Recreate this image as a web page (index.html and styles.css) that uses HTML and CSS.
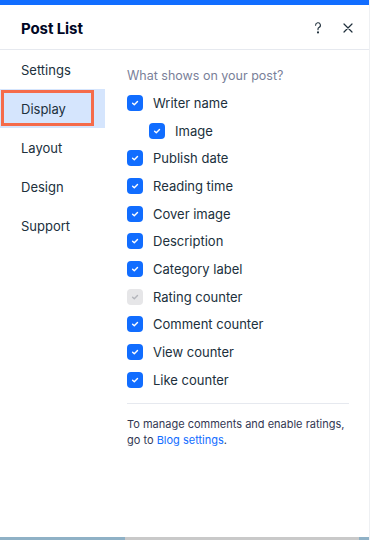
FILE: index.html
```html
<!DOCTYPE html>
<html lang="en">
<head>
  <meta charset="UTF-8">
  <meta name="viewport" content="width=device-width, initial-scale=1.0">
  <title>Post List</title>
  <link rel="stylesheet" href="styles.css">
</head>
<body>
  <div class="panel">
    <div class="top-bar"></div>
    <div class="header">
      <h1 class="title">Post List</h1>
      <div class="header-actions">
        <button class="icon-btn" aria-label="Help">
          <svg width="14" height="14" viewBox="0 0 14 14" fill="none" stroke="#20303c" stroke-width="1.1" stroke-linecap="round">
            <path d="M4.6 4.2a2.4 2.4 0 1 1 3.3 2.2c-.6.3-.9.8-.9 1.4v1"/>
            <circle cx="7" cy="11.4" r=".5" fill="#20303c"/>
          </svg>
        </button>
        <button class="icon-btn" aria-label="Close">
          <svg width="14" height="14" viewBox="0 0 14 14" fill="none" stroke="#20303c" stroke-width="1.2" stroke-linecap="round">
            <path d="M3 3l8 8M11 3l-8 8"/>
          </svg>
        </button>
      </div>
    </div>

    <div class="main">
      <nav class="sidebar">
        <div class="nav-item">Settings</div>
        <div class="nav-item active">Display<span class="highlight"></span></div>
        <div class="nav-item">Layout</div>
        <div class="nav-item">Design</div>
        <div class="nav-item">Support</div>
      </nav>

      <div class="content">
        <div class="section-title">What shows on your post?</div>
        <div class="options" id="options"></div>
        <div class="divider"></div>
        <p class="note">To manage comments and enable ratings,<br>go to <a href="#">Blog settings</a>.</p>
      </div>
    </div>

    <div class="bottom-strip">
      <span class="strip-a"></span>
      <span class="strip-b"></span>
      <span class="strip-c"></span>
    </div>
  </div>

  <script>
    // Liste des options affichées
    var options = [
      { label: 'Writer name' },
      { label: 'Image', sub: true },
      { label: 'Publish date' },
      { label: 'Reading time' },
      { label: 'Cover image' },
      { label: 'Description' },
      { label: 'Category label' },
      { label: 'Rating counter', disabled: true },
      { label: 'Comment counter' },
      { label: 'View counter' },
      { label: 'Like counter' }
    ];

    var check = '<svg width="10" height="10" viewBox="0 0 10 10" fill="none" stroke="currentColor" stroke-width="1.4" stroke-linecap="round" stroke-linejoin="round"><path d="M2.6 5.2l1.7 1.6 3.2-3.4"/></svg>';

    var list = document.getElementById('options');
    options.forEach(function(opt) {
      var row = document.createElement('label');
      row.className = 'option' + (opt.sub ? ' sub' : '');
      var box = document.createElement('span');
      box.className = 'checkbox' + (opt.disabled ? ' disabled' : '');
      box.innerHTML = check;
      var text = document.createElement('span');
      text.className = 'option-label';
      text.textContent = opt.label;
      row.appendChild(box);
      row.appendChild(text);
      list.appendChild(row);
    });
  </script>
</body>
</html>
```

FILE: styles.css
```css
/* Mise en page du panneau */
html, body {
  margin: 0;
  padding: 0;
}

body {
  width: 370px;
  height: 540px;
  background: #fff;
  font-family: "Inter", "Noto Sans", sans-serif;
  color: #20303c;
  overflow: hidden;
}

.panel {
  height: 540px;
  display: flex;
  flex-direction: column;
  border-right: 1px solid #eef0f3;
  box-sizing: border-box;
}

.top-bar {
  height: 5px;
  background-color: #116dff;
  flex: none;
}

.header {
  height: 45px;
  display: flex;
  align-items: center;
  justify-content: space-between;
  padding: 2px 14px 0 21px;
  box-sizing: border-box;
  border-bottom: 1px solid #e6e9ef;
  flex: none;
}

.title {
  margin: 0;
  font-size: 15px;
  font-weight: 700;
  color: #000624;
  letter-spacing: -0.1px;
}

.header-actions {
  display: flex;
  gap: 16px;
  align-items: center;
}

.icon-btn {
  width: 14px;
  height: 14px;
  padding: 0;
  border: none;
  background: none;
  display: flex;
}

.main {
  flex: 1;
  display: flex;
}

.sidebar {
  width: 105px;
  flex: none;
}

.nav-item {
  position: relative;
  height: 39px;
  box-sizing: border-box;
  padding: 2px 0 0 21px;
  line-height: 37px;
  font-size: 13px;
  color: #20303c;
}

.nav-item.active {
  background-color: #d5e5fd;
}

/* cadre d'annotation */
.highlight {
  position: absolute;
  left: 1px;
  top: 1px;
  width: 93px;
  height: 36px;
  border: 3px solid #f56b4a;
  box-sizing: border-box;
}

.content {
  flex: 1;
  padding: 17px 20px 0 22px;
}

.section-title {
  font-size: 12.5px;
  line-height: 18px;
  color: #7a7f99;
}

.options {
  margin-top: 4px;
}

.option {
  height: 27.7px;
  display: flex;
  align-items: center;
  gap: 10px;
  font-size: 13px;
  color: #20303c;
}

.option.sub {
  padding-left: 22px;
}

.checkbox {
  width: 16px;
  height: 16px;
  border-radius: 4px;
  background-color: #116dff;
  color: #fff;
  display: flex;
  align-items: center;
  justify-content: center;
  flex: none;
}

.checkbox.disabled {
  background-color: #e6e6e8;
  color: #b3b5bb;
}

.divider {
  margin-top: 9px;
  height: 1px;
  background-color: #e6e9ef;
}

.note {
  margin: 12px 0 0;
  font-size: 11px;
  line-height: 16px;
  color: #333853;
}

.note a {
  color: #116dff;
  text-decoration: none;
}

.bottom-strip {
  height: 3px;
  display: flex;
  flex: none;
}

.strip-a {
  width: 125px;
  background-color: #8fb1c6;
}

.strip-b {
  flex: 1;
  background-color: #c9c9c9;
}

.strip-c {
  width: 10px;
  background-color: #8fb1c6;
}
```
